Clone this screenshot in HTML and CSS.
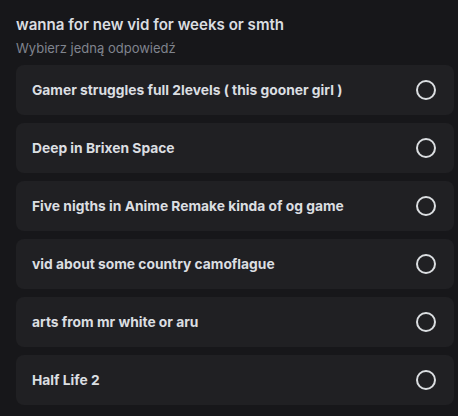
FILE: index.html
```html
<!DOCTYPE html>
<html>
<head>
<meta charset="utf-8">
<link rel="stylesheet" href="styles.css">
</head>
<body>
<div class="poll">
  <div class="title">wanna for new vid for weeks or smth</div>
  <div class="subtitle">Wybierz jedną odpowiedź</div>
  <div class="options">
    <div class="option"><span class="label">Gamer struggles full 2levels ( this gooner girl )</span><span class="radio"></span></div>
    <div class="option"><span class="label">Deep in Brixen Space</span><span class="radio"></span></div>
    <div class="option"><span class="label">Five nigths in Anime Remake kinda of og game</span><span class="radio"></span></div>
    <div class="option"><span class="label">vid about some country camoflague</span><span class="radio"></span></div>
    <div class="option"><span class="label">arts from mr white or aru</span><span class="radio"></span></div>
    <div class="option"><span class="label">Half Life 2</span><span class="radio"></span></div>
  </div>
</div>
</body>
</html>
```

FILE: styles.css
```css
html, body {
  margin: 0;
  padding: 0;
  background: #17171a;
}
body {
  font-family: Inter, "Noto Sans", sans-serif;
}
.poll {
  padding: 15px 4px 0 16px;
}
.title {
  font-size: 15.1px;
  font-weight: 600;
  color: #dbdee1;
  line-height: 20px;
}
.subtitle {
  margin-top: 4px;
  font-size: 13px;
  color: #80848e;
  line-height: 18px;
}
.options {
  margin-top: 8px;
  display: flex;
  flex-direction: column;
  gap: 8px;
}
.option {
  height: 50px;
  background: #202023;
  border-radius: 8px;
  display: flex;
  align-items: center;
  justify-content: space-between;
  padding: 0 18px 0 16px;
}
.label {
  font-size: 13.8px;
  font-weight: 700;
  color: #dbdee1;
}
.radio {
  width: 16px;
  height: 16px;
  border: 2px solid #dbdee1;
  border-radius: 50%;
}
```
